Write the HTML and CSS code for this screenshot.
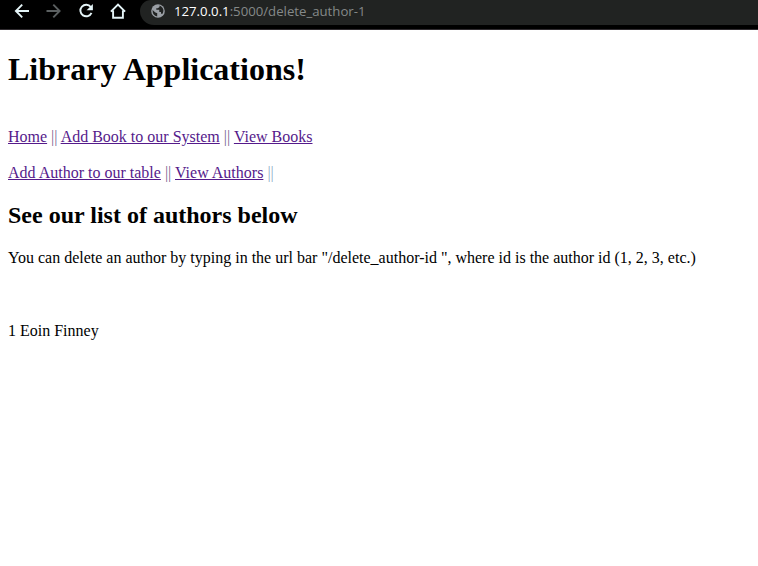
FILE: index.html
```html
<!DOCTYPE html>
<html lang="en">
<head>
<meta charset="utf-8">
<title>Library Applications</title>
<link rel="stylesheet" href="styles.css">
</head>
<body>
<header class="toolbar">
  <svg class="icon" viewBox="0 0 16 16"><path d="M15 8H2.2M8.2 1.7L1.9 8L8.2 14.3"/></svg>
  <svg class="icon dim" viewBox="0 0 16 16"><path d="M.5 8H13.3M7.3 1.7L13.6 8L7.3 14.3"/></svg>
  <svg class="icon" viewBox="0 0 16 16"><path d="M12.8 4A5.8 5.8 0 1 0 13.5 9.8"/><path class="solid" d="M14.9 1V7.3H8.6Z"/></svg>
  <svg class="icon" viewBox="0 0 16 16"><path d="M.9 8.7L8 1.6L15.1 8.7M3.1 7.5V14.8H12.9V7.5"/></svg>
  <div class="address">
    <svg class="globe" viewBox="0 0 14 14"><circle cx="7" cy="7" r="6.8"/><path d="M1.6 6L4 8.2Q5.2 9.2 6.2 9V12.4Q1.4 11.5 1.6 6ZM8.5 1.6V3L6.8 4.2H5.3V5.8H8.3V8H10V9.8H11.6Q14.2 4.2 8.5 1.6Z"/></svg>
    <span class="url"><span class="host">127.0.0.1</span>:5000/delete_author-1</span>
  </div>
</header>
<main class="page">
  <h1>Library Applications!</h1>
  <p class="books"><a href="#">Home</a> <span class="sep">||</span> <a href="#">Add Book to our System</a> <span class="sep">||</span> <a href="#">View Books</a></p>
  <p><a href="#">Add Author to our table</a> <span class="sep">||</span> <a href="#">View Authors</a> <span class="sep last">||</span></p>
  <h2>See our list of authors below</h2>
  <p>You can delete an author by typing in the url bar "/delete_author-id ", where id is the author id (1, 2, 3, etc.)</p>
  <p class="author">1 Eoin Finney</p>
</main>
</body>
</html>
```
FILE: styles.css
```css
body {
  margin: 0;
  background: #fff;
  color: #000;
  font: 16px/18px "Liberation Serif", serif;
}
.toolbar {
  box-sizing: border-box;
  display: flex;
  align-items: flex-start;
  gap: 16px;
  height: 30px;
  padding-left: 14px;
  background: #000;
  border-bottom: 1px solid #302c30;
}
.icon {
  flex: none;
  width: 16px;
  height: 16px;
  margin-top: 3px;
  fill: none;
  stroke: #e4f4f7;
  stroke-width: 1.9;
}
.icon.dim { stroke: #5b6061; }
.icon .solid { fill: #e4f4f7; stroke: none; }
.address {
  display: flex;
  flex: 1;
  align-items: flex-start;
  height: 25px;
  margin-left: -2px;
  background: #212322;
  border-radius: 11px 0 0 14px;
}
.globe {
  flex: none;
  width: 14px;
  height: 14px;
  margin: 4px 0 0 11px;
  fill: #9a9fa5;
}
.globe path { fill: #212322; }
.url {
  margin: 2px 0 0 9px;
  color: #858989;
  font: 13.2px/18px "Open Sans", "Noto Sans", sans-serif;
  white-space: nowrap;
}
.host { color: #fff; }
.page { padding: 21px 8px 0; }
h1 {
  margin: 0;
  font-size: 32px;
  line-height: 37px;
}
h2 {
  margin: 20px 0;
  font-size: 24px;
  line-height: 27px;
}
p { margin: 18px 0 0; }
.books { margin-top: 40px; }
.author { margin-top: 55px; }
a { color: #551a8b; }
.sep { color: #77668f; }
.last { color: #8eaec7; }
```
